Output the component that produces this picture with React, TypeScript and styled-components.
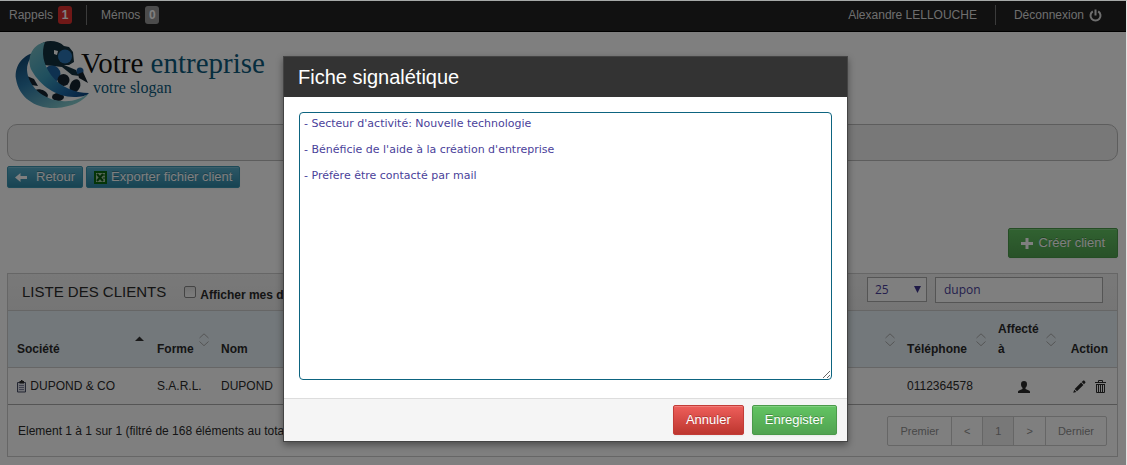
import React from "react";
import styled, { createGlobalStyle, css } from "styled-components";

const GlobalStyle = createGlobalStyle`
  *, *::before, *::after { box-sizing: border-box; }
  body {
    margin: 0;
    background: #fff;
    font: 12px/20px "Liberation Sans", Arial, sans-serif;
    color: #2b2b2b;
  }
`;

const Shell = styled.div`
  position: relative;
  min-height: 100vh;
  border-top: 1px solid #a6aaa8;
  border-right: 1px solid #e4e4e4;
  overflow: hidden;
`;

const TopBar = styled.nav`
  display: flex;
  justify-content: space-between;
  height: 31px;
  padding: 4px 24px 0 9px;
  background: #222;
  border-bottom: 1px solid #000;
`;

const BarGroup = styled.div`
  display: flex;
`;

const BarLink = styled.a<{ $divided?: boolean }>`
  display: flex;
  align-items: center;
  gap: 5px;
  height: 20px;
  color: #ddd;
  text-decoration: none;
  ${(p) =>
    p.$divided &&
    css`
      margin-left: 14px;
      padding-left: 14px;
      border-left: 1px solid #777;
    `}
`;

const AccountLink = styled(BarLink)`
  ${(p) =>
    p.$divided &&
    css`
      margin-left: 18px;
      padding-left: 18px;
    `}
`;

const Badge = styled.span<{ $tone: string }>`
  width: 14px;
  height: 18px;
  border-radius: 3px;
  background: ${(p) => p.$tone};
  color: #fff;
  font-weight: bold;
  line-height: 18px;
  text-align: center;
`;

const Page = styled.main`
  padding: 3px 8px 8px 7px;
`;

const Brand = styled.a`
  display: flex;
  height: 78px;
  padding: 1px 0 0 3px;
  text-decoration: none;
`;

const BrandText = styled.span`
  display: block;
  margin: 12px 0 0 -14px;
  font-family: "Liberation Serif", "Times New Roman", serif;
  color: #0c5a7c;
`;

const BrandName = styled.span`
  display: block;
  font-size: 29px;
  line-height: 30px;
  b { font-weight: normal; color: #111; }
`;

const Slogan = styled.span`
  display: block;
  padding-left: 12px;
  font-size: 16px;
  line-height: 20px;
`;

const MenuStrip = styled.div`
  height: 37px;
  margin: 11px 0 5px;
  border: 1px solid #bbb;
  border-radius: 10px;
  background: #f0f0f0;
`;

const Toolbar = styled.div<{ $end?: boolean }>`
  display: flex;
  gap: 3px;
  justify-content: ${(p) => (p.$end ? "flex-end" : "flex-start")};
  margin-bottom: ${(p) => (p.$end ? 15 : 40)}px;
`;

const tones = {
  blue: ["#5bb0cc", "#2f88a6", "#3a94b0"],
  green: ["#62c462", "#51a351", "#4a9a4a"],
  red: ["#ee5f5b", "#bd362f", "#c23c37"],
};

const Button = styled.button<{ $tone: keyof typeof tones; $small?: boolean }>`
  display: inline-flex;
  align-items: center;
  height: ${(p) => (p.$small ? 22 : 30)}px;
  padding: 0 ${(p) => (p.$small ? 7 : 12)}px;
  border: 1px solid ${(p) => tones[p.$tone][2]};
  border-radius: 2px;
  background: linear-gradient(${(p) => tones[p.$tone][0]}, ${(p) => tones[p.$tone][1]});
  box-shadow: inset 0 1px 0 rgba(255, 255, 255, 0.2), 0 1px 2px rgba(0, 0, 0, 0.05);
  color: #fff;
  font: 13px/20px "Liberation Sans", Arial, sans-serif;
  text-shadow: 0 -1px 0 rgba(0, 0, 0, 0.25);
  white-space: nowrap;
`;

const Panel = styled.section`
  border: 1px solid #ccc;
`;

const PanelHead = styled.header`
  display: flex;
  align-items: center;
  height: 37px;
  padding: 0 14px;
  border-bottom: 1px solid #ccc;
  background: linear-gradient(#f2f2f2, #ebebeb);
`;

const PanelTitle = styled.h1`
  margin: 0 18px 0 0;
  font-size: 15px;
  font-weight: normal;
  line-height: 20px;
`;

const CheckLabel = styled.label`
  display: flex;
  align-items: flex-end;
  flex: 1;
  gap: 4px;
  padding-top: 6px;
  font-weight: bold;
`;

const CheckBox = styled.input`
  appearance: none;
  width: 12px;
  height: 12px;
  margin: 0 0 7px;
  border: 1px solid #888;
  border-radius: 2px;
  background: linear-gradient(#e4e4e4, #fafafa);
`;

const Filters = styled.div`
  display: flex;
  align-items: flex-start;
  gap: 8px;
  padding-bottom: 4px;
`;

const SelectWrap = styled.div`
  position: relative;
  svg {
    position: absolute;
    top: 9px;
    right: 6px;
    pointer-events: none;
  }
`;

const field = css`
  border: 1px solid #aaa;
  border-radius: 0;
  background: #fff;
  color: #4a3f9a;
  font: 12px/18px "Open Sans", "Noto Sans", sans-serif;
`;

const Select = styled.select`
  ${field}
  appearance: none;
  display: block;
  width: 60px;
  height: 25px;
  padding: 0 7px;
`;

const Search = styled.input`
  ${field}
  width: 168px;
  height: 26px;
  padding: 0 8px 1px;
`;

const Table = styled.table`
  width: 100%;
  table-layout: fixed;
  border-collapse: separate;
  border-spacing: 0;
`;

const Th = styled.th<{ $w?: number; $end?: boolean }>`
  position: relative;
  width: ${(p) => (p.$w ? p.$w + "px" : "auto")};
  height: 57px;
  padding: 8px 9px;
  border-bottom: 1px solid #ccc;
  background: #e6f1f7;
  text-align: ${(p) => (p.$end ? "right" : "left")};
  vertical-align: bottom;
  svg {
    position: absolute;
    top: 22px;
    right: 3px;
  }
`;

const Td = styled.td<{ $align?: string }>`
  height: 37px;
  padding: 0 9px;
  border-bottom: 1px solid #aaa;
  text-align: ${(p) => p.$align || "left"};
  white-space: nowrap;
  svg { vertical-align: middle; }
`;

const MailLink = styled.a`
  padding-right: 41px;
  color: #14506e;
  text-decoration: none;
`;

const RowActions = styled.div`
  display: flex;
  justify-content: flex-end;
  gap: 9px;
  padding-right: 2px;
`;

const IconButton = styled.button`
  display: block;
  padding: 0;
  border: 0;
  background: none;
  color: #2b2b2b;
`;

const PanelFoot = styled.footer`
  display: flex;
  align-items: center;
  justify-content: space-between;
  height: 51px;
  padding: 0 10px;
`;

const Pager = styled.div`
  display: flex;
  border: 1px solid #ccc;
  border-radius: 2px;
`;

const PageButton = styled.button<{ $current?: boolean }>`
  height: 28px;
  padding: 0 12px;
  border: 0;
  background: ${(p) => (p.$current ? "#f0f0f0" : "none")};
  color: #8f8f8f;
  font: 11px/20px "Liberation Sans", Arial, sans-serif;
  & + & { border-left: 1px solid #ccc; }
`;

const Overlay = styled.div`
  position: absolute;
  inset: 0;
  display: flex;
  justify-content: center;
  align-items: flex-start;
  padding: 55px 0 0 5px;
  background: rgba(0, 0, 0, 0.5);
`;

const Dialog = styled.form`
  width: 565px;
  max-width: 100%;
  border: 1px solid #444;
  background: #fff;
  box-shadow: 0 3px 7px rgba(0, 0, 0, 0.4);
`;

const DialogTitle = styled.h2`
  margin: 0;
  padding: 0 14px;
  background: #333;
  color: #fff;
  font-size: 20px;
  font-weight: normal;
  line-height: 40px;
`;

const DialogBody = styled.div`
  padding: 15px 15px 18px;
`;

const Notes = styled.textarea`
  display: block;
  width: 100%;
  height: 268px;
  padding: 4px;
  border: 1px solid #0d6480;
  border-radius: 4px;
  outline: 0;
  color: #4a3f9a;
  font: 11px/13px "DejaVu Sans", Verdana, sans-serif;
`;

const DialogFoot = styled.footer`
  display: flex;
  justify-content: flex-end;
  gap: 8px;
  padding: 6px 10px;
  border-top: 1px solid #ddd;
  background: #f5f5f5;
`;

const Logo = () => (
  <svg width="85" height="76" viewBox="0 0 85 76" aria-hidden="true">
    <defs>
      <linearGradient id="teal" x1="0" y1="0" x2="1" y2="1">
        <stop offset="0" stopColor="#7fc2c6" />
        <stop offset="0.45" stopColor="#3f9fbd" />
        <stop offset="0.75" stopColor="#1c69a8" />
        <stop offset="1" stopColor="#0b3f78" />
      </linearGradient>
      <linearGradient id="deep" x1="0" y1="0" x2="0.7" y2="1">
        <stop offset="0" stopColor="#0b3c68" />
        <stop offset="0.45" stopColor="#2a78a8" />
        <stop offset="1" stopColor="#86cccd" />
      </linearGradient>
    </defs>
    <path d="M28 24L50 26 66 34 72 46 66 60 40 68 18 56 16 32z" fill="#f4f6f7" />
    <path d="M29 10C34 3 48 4 54 10l5 1 4 5 1 10-5 3-5 0 12 5 3 6-7-1-10-8-18-2-6-6z" fill="#12303f" />
    <path d="M44 14l4 1-1 4-3-1z" fill="#fff" />
    <circle cx="55" cy="20.500" r="7" fill="#2a75b5" />
    <circle cx="42" cy="38" r="8.500" fill="#1d62a0" />
    <circle cx="70" cy="35" r="3.500" fill="#1d5c98" />
    <path d="M68 38l5-2 5 11-9-5z" fill="#12202b" />
    <circle cx="53.500" cy="44" r="6" fill="#14232f" />
    <ellipse cx="65" cy="50" rx="5" ry="7" transform="rotate(24 65 50)" fill="#14232f" />
    <path d="M17 40l7 3 4 7-7-1z" fill="#14232f" />
    <path d="M25 54c4-2 11 0 13 5l-1 4c-6 0-10-3-12-9z" fill="#14232f" />
    <ellipse cx="48" cy="61" rx="6" ry="4" fill="#14232f" />
    <path d="M27 16C14 18 4 29 6 43c3 19 20 30 40 29 16-1 28-7 33-15-8 6-17 9-27 8C33 64 18 50 17 34c0-8 4-14 10-18z" fill="url(#deep)" />
    <path d="M35 6C21 9 16 24 22 35c8 14 24 26 42 26 7 0 12-1 15-4-14 0-29-6-38-18-8-11-10-23-6-33z" fill="url(#teal)" />
  </svg>
);

const PowerIcon = () => (
  <svg width="13" height="13" viewBox="0 0 13 13" fill="none" stroke="currentColor" strokeWidth="2" aria-hidden="true">
    <path d="M3.8 2.4a5 5 0 1 0 5.4 0M6.5 0.5v6" />
  </svg>
);

const LeadIcon = styled.svg<{ $gap: number }>`
  flex: none;
  margin-right: ${(p) => p.$gap}px;
`;

const ArrowIcon = () => (
  <LeadIcon $gap={9} width="12" height="12" viewBox="0 0 12 12" fill="currentColor" aria-hidden="true">
    <path d="M0 6.500L5.500 2v3H12v3H5.500v3z" />
  </LeadIcon>
);

const SheetIcon = () => (
  <LeadIcon $gap={4} width="13" height="13" viewBox="0 0 13 13" aria-hidden="true">
    <path d="M0 0h13v13H0z" fill="#0b6b10" />
    <path d="M2 2h9v9H2z" fill="#a8cca8" />
    <path d="M3 3l6 7M9 3l-6 7" stroke="#0b5a10" strokeWidth="2" />
    <path d="M8 4h3M9 7h2" stroke="#0b5a10" />
  </LeadIcon>
);

const PlusIcon = () => (
  <LeadIcon $gap={6} width="12" height="12" viewBox="0 0 12 12" fill="currentColor" aria-hidden="true">
    <path d="M4.500 1h3v4H12v3H7.500v4h-3V8H0V5h4.500z" />
  </LeadIcon>
);

const SortIcon = () => (
  <svg width="10" height="14" viewBox="0 0 10 14" fill="none" stroke="#aaa" aria-hidden="true">
    <path d="M0.500 5L5 0.800 9.500 5M0.500 8.500L5 12.700 9.500 8.500" />
  </svg>
);

const SortedIcon = () => (
  <svg width="10" height="14" viewBox="0 0 10 14" aria-hidden="true">
    <path d="M0 8L4.500 3.500 9 8z" fill="#333" />
  </svg>
);

const ClipboardIcon = () => (
  <svg width="10" height="13" viewBox="0 0 10 13" aria-hidden="true">
    <path d="M0.500 2.500h8v9.500h-8z" fill="#e4e6ee" stroke="#4a5068" />
    <path d="M2.500 1h1.500V0h1.500v1H7v2.500H2.500z" fill="#2b2b2b" />
    <path d="M2 5.500h5M2 7.500h5M2 9.500h5" stroke="#8085a0" />
  </svg>
);

const UserIcon = () => (
  <svg width="12" height="12" viewBox="0 0 12 12" fill="#2b2b2b" aria-hidden="true">
    <path d="M6 0c2 0 3 1.200 3 3.200C9 5 8.200 6 7.500 6.800v1.300L11 9.500c0.700 0.300 1 0.800 1 1.500v1H0v-1c0-0.700 0.300-1.200 1-1.500l3.500-1.400V6.800C3.800 6 3 5 3 3.200 3 1.200 4 0 6 0z" />
  </svg>
);

const PencilIcon = () => (
  <svg width="13" height="13" viewBox="0 0 13 13" fill="currentColor" aria-hidden="true">
    <path d="M9.800 0.900c0.600-0.600 1.300-0.500 1.800 0l0.500 0.500c0.500 0.500 0.500 1.200 0 1.700L11 4.200 8.700 2zM8.100 2.600l2.300 2.300L4 11.300 1.700 9zM1.200 9.700l2.200 2.200L0.200 12.800z" />
  </svg>
);

const TrashIcon = () => (
  <svg width="11" height="13" viewBox="0 0 11 13" fill="none" stroke="currentColor" aria-hidden="true">
    <path d="M0 2.500h11M3.500 2V0.500h4V2" />
    <path d="M1.500 4v8.500h8V4M3.500 5v7M5.500 5v7M7.500 5v7M1 4.500h9" />
  </svg>
);

const notes = [
  "- Secteur d'activité: Nouvelle technologie",
  "- Bénéficie de l'aide à la création d'entreprise",
  "- Préfère être contacté par mail",
].join("\n\n");

export default function App() {
  return (
    <Shell>
      <GlobalStyle />
      <TopBar>
        <BarGroup>
          <BarLink href="#rappels">
            Rappels <Badge $tone="#e0302e">1</Badge>
          </BarLink>
          <BarLink href="#memos" $divided>
            Mémos <Badge $tone="#999">0</Badge>
          </BarLink>
        </BarGroup>
        <BarGroup>
          <AccountLink href="#compte">Alexandre LELLOUCHE</AccountLink>
          <AccountLink href="#deconnexion" $divided>
            Déconnexion <PowerIcon />
          </AccountLink>
        </BarGroup>
      </TopBar>
      <Page>
        <Brand href="#accueil">
          <Logo />
          <BrandText>
            <BrandName>
              <b>Votre</b> entreprise
            </BrandName>
            <Slogan>votre slogan</Slogan>
          </BrandText>
        </Brand>
        <MenuStrip />
        <Toolbar>
          <Button $tone="blue" $small>
            <ArrowIcon />
            Retour
          </Button>
          <Button $tone="blue" $small>
            <SheetIcon />
            Exporter fichier client
          </Button>
        </Toolbar>
        <Toolbar $end>
          <Button $tone="green">
            <PlusIcon />
            Créer client
          </Button>
        </Toolbar>
        <Panel>
          <PanelHead>
            <PanelTitle>LISTE DES CLIENTS</PanelTitle>
            <CheckLabel>
              <CheckBox type="checkbox" />
              Afficher mes dossiers
            </CheckLabel>
            <Filters>
              <SelectWrap>
                <Select aria-label="Lignes par page" defaultValue="25">
                  <option>25</option>
                </Select>
                <svg width="7" height="7" viewBox="0 0 7 7" aria-hidden="true">
                  <path d="M0 0h7L3.500 7z" fill="#3f358f" />
                </svg>
              </SelectWrap>
              <Search aria-label="Rechercher" defaultValue="dupon" />
            </Filters>
          </PanelHead>
          <Table>
            <thead>
              <tr>
                <Th $w={140}>
                  Société
                  <SortedIcon />
                </Th>
                <Th $w={64}>
                  Forme
                  <SortIcon />
                </Th>
                <Th $w={120}>Nom</Th>
                <Th aria-label="E-mail">
                  <SortIcon />
                </Th>
                <Th $w={91}>
                  Téléphone
                  <SortIcon />
                </Th>
                <Th $w={70}>
                  Affecté
                  <br />à
                  <SortIcon />
                </Th>
                <Th $w={58} $end>
                  Action
                </Th>
              </tr>
            </thead>
            <tbody>
              <tr>
                <Td>
                  <ClipboardIcon /> DUPOND &amp; CO
                </Td>
                <Td>S.A.R.L.</Td>
                <Td>DUPOND</Td>
                <Td $align="right">
                  <MailLink href="#mail">dupond@dupond.com</MailLink>
                </Td>
                <Td>0112364578</Td>
                <Td $align="center">
                  <UserIcon />
                </Td>
                <Td>
                  <RowActions>
                    <IconButton aria-label="Modifier">
                      <PencilIcon />
                    </IconButton>
                    <IconButton aria-label="Supprimer">
                      <TrashIcon />
                    </IconButton>
                  </RowActions>
                </Td>
              </tr>
            </tbody>
          </Table>
          <PanelFoot>
            <span>Element 1 à 1 sur 1 (filtré de 168 éléments au total)</span>
            <Pager>
              <PageButton>Premier</PageButton>
              <PageButton>&lt;</PageButton>
              <PageButton $current>1</PageButton>
              <PageButton>&gt;</PageButton>
              <PageButton>Dernier</PageButton>
            </Pager>
          </PanelFoot>
        </Panel>
      </Page>
      <Overlay>
        <Dialog role="dialog" aria-labelledby="dialog-title">
          <DialogTitle id="dialog-title">Fiche signalétique</DialogTitle>
          <DialogBody>
            <Notes aria-labelledby="dialog-title" defaultValue={notes} spellCheck={false} />
          </DialogBody>
          <DialogFoot>
            <Button type="button" $tone="red">
              Annuler
            </Button>
            <Button type="button" $tone="green">
              Enregister
            </Button>
          </DialogFoot>
        </Dialog>
      </Overlay>
    </Shell>
  );
}
